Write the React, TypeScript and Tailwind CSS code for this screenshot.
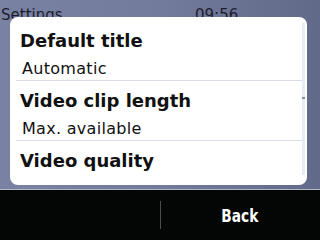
import React from "react";

const items = [
  { title: "Default title", sub: "Automatic" },
  { title: "Video clip length", sub: "Max. available" },
  { title: "Video quality", sub: "" },
];

export default function App() {
  return (
    <div className="w-[320px] h-[240px] overflow-hidden flex flex-col bg-black" style={{ fontFamily: '"DejaVu Sans", sans-serif' }}>
      <div className="h-[189px] bg-gradient-to-r from-[#7a82a4] via-[#737b9c] to-[#626a8a] flex flex-col">
        <div className="h-[17px] flex pt-[6px] text-[15px] leading-[18px] text-[#1c1c2a]">
          <span className="ml-[1px] w-[194px]">Settings</span>
          <span>09:56</span>
        </div>
        <div className="relative mx-[10px] w-[297px] h-[168px] bg-white rounded-[8px] overflow-hidden flex pt-[4px]">
          <div className="flex-1 pl-[6px] flex flex-col">
            {items.map((it) => (
              <div key={it.title} className={`h-[60px] shrink-0 pt-[8px] text-[#111111] ${it.sub ? "border-b border-[#d8dde8]" : ""}`}>
                <div className="pl-[4px] text-[18px] leading-[24px] font-bold">{it.title}</div>
                {it.sub && <div className="pl-[6px] mt-[6px] text-[16px] leading-[20px] tracking-[0.3px]">{it.sub}</div>}
              </div>
            ))}
          </div>
          <div className="w-[3px] mr-[2px] mt-[2px] mb-[10px] bg-[#e8ecf4] flex flex-col">
            <div className="h-[74px]" />
            <div className="h-[2px] bg-[#8a8f9c]" />
          </div>
        </div>
      </div>
      <div className="h-[1px] bg-[#b4b8c8]" />
      <div className="flex-1 flex items-center bg-[#040606]">
        <div className="w-[160px] h-full" />
        <div className="w-[1px] h-[28px] bg-[#4a4c50]" />
        <div className="flex-1 flex justify-center pr-[1px]">
          <span className="inline-block scale-x-[0.85] text-white font-bold text-[18px] leading-[20px] mt-[2px]" style={{ fontFamily: '"Liberation Sans Narrow", "DejaVu Sans Condensed", sans-serif' }}>
            Back
          </span>
        </div>
      </div>
    </div>
  );
}
